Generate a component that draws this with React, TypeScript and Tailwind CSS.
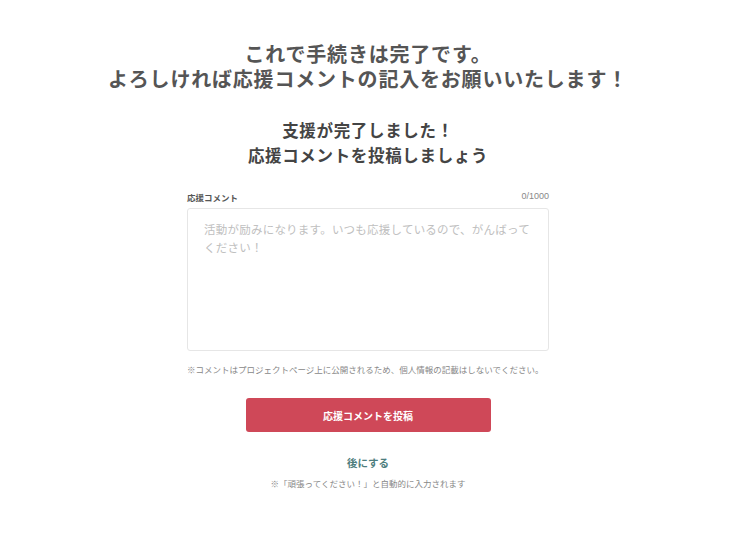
import React from "react";

export default function App() {
  const jp = { fontFamily: '"Noto Sans CJK JP", "Noto Sans", sans-serif' };
  return (
    <div className="w-[736px] h-[552px] bg-white flex flex-col items-center" style={jp}>
      <h1 className="mt-[41px] text-center text-[20px] leading-[25px] font-bold text-[#555] tracking-[0.04em]">
        <span className="block">これで手続きは完了です。</span>
        <span className="block">よろしければ応援コメントの記入をお願いいたします！</span>
      </h1>
      <h2 className="mt-[27px] text-center text-[16.5px] leading-[25px] font-bold text-[#444] tracking-[0.04em]">
        <span className="block">支援が完了しました！</span>
        <span className="block">応援コメントを投稿しましょう</span>
      </h2>
      <div className="mt-[21px] w-[362px] flex flex-col">
        <div className="flex justify-between items-center h-[16px]">
          <span className="text-[8.5px] font-bold text-[#555]">応援コメント</span>
          <span className="text-[9px] text-[#888]" style={{ fontFamily: '"Liberation Sans", sans-serif' }}>0/1000</span>
        </div>
        <div className="mt-[3px] h-[143px] border border-[#e6e6e6] rounded-[3px] px-[16px] pt-[11px] text-[11.5px] leading-[18px] text-[#c0c0c0] tracking-[0.02em] whitespace-nowrap">
          活動が励みになります。いつも応援しているので、がんばって
          <br />
          ください！
        </div>
        <p className="mt-[12px] text-[8.5px] text-[#888] leading-[12px] whitespace-nowrap">
          ※コメントはプロジェクトページ上に公開されるため、個人情報の記載はしないでください。
        </p>
      </div>
      <button className="mt-[23px] w-[245px] h-[34px] rounded-[3px] bg-[#cf4858] text-white text-[10px] font-bold">
        応援コメントを投稿
      </button>
      <div className="mt-[23px] text-[10.5px] font-bold text-[#4d7d7d] leading-[16px]">後にする</div>
      <div className="mt-[6px] text-[8.5px] text-[#888] leading-[12px]">※「頑張ってください！」と自動的に入力されます</div>
    </div>
  );
}
